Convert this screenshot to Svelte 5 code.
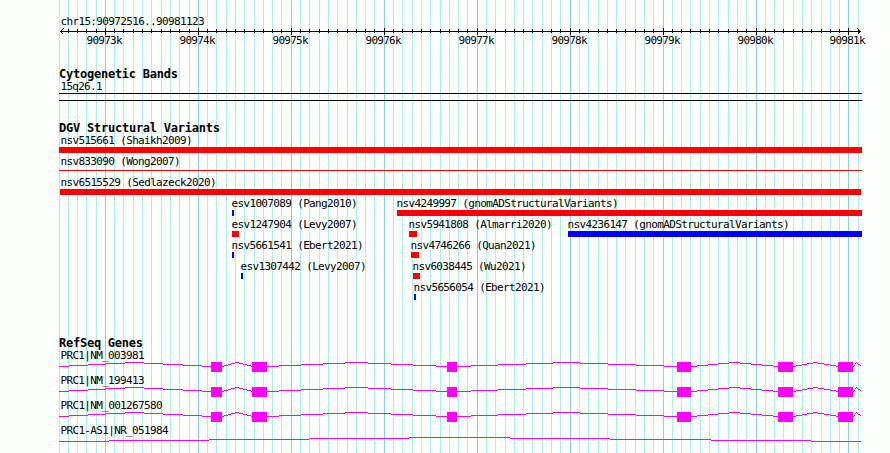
<script>
  const left = 59;
  const right = 862;
  const charWidth = 6;
  const boldWidth = 7;

  // x of a position given in hundreds of bases from 90973k
  const posX = (n) => Math.floor(105.39 + n * 9.2948);

  const ticks = [{ x: left, major: false }];
  for (let n = -4; n <= 81; n++) {
    ticks.push({ x: posX(n), major: n % 10 == 0, label: `${90973 + n / 10}k` });
  }
  const majors = ticks.filter((t) => t.major);

  const variants = [
    { row: 0, start: 59, end: 862, label: "nsv515661 (Shaikh2009)" },
    { row: 1, start: 59, end: 862, label: "nsv833090 (Wong2007)", thin: true },
    { row: 2, start: 60, end: 861, label: "nsv6515529 (Sedlazeck2020)" },
    { row: 3, start: 232, end: 234, label: "esv1007089 (Pang2010)", gain: true },
    { row: 3, start: 397, end: 862, label: "nsv4249997 (gnomADStructuralVariants)" },
    { row: 4, start: 232, end: 239, label: "esv1247904 (Levy2007)" },
    { row: 4, start: 409, end: 417, label: "nsv5941808 (Almarri2020)" },
    { row: 4, start: 568, end: 862, label: "nsv4236147 (gnomADStructuralVariants)", gain: true },
    { row: 5, start: 232, end: 234, label: "nsv5661541 (Ebert2021)", gain: true },
    { row: 5, start: 411, end: 419, label: "nsv4746266 (Quan2021)" },
    { row: 6, start: 241, end: 243, label: "esv1307442 (Levy2007)", gain: true },
    { row: 6, start: 413, end: 420, label: "nsv6038445 (Wu2021)" },
    { row: 7, start: 414, end: 416, label: "nsv5656054 (Ebert2021)", gain: true },
  ];

  const exons = [
    [211, 222],
    [252, 267],
    [447, 457],
    [677, 691],
    [778, 793],
    [838, 853],
  ];
  const genes = [
    { label: "PRC1|NM_003981", exons },
    { label: "PRC1|NM_199413", exons },
    { label: "PRC1|NM_001267580", exons },
    { label: "PRC1-AS1|NR_051984", exons: [] },
  ];

  // introns are drawn as one pixel high steps that peak in the middle
  function intronPath(exons) {
    const edges = [left, ...exons.flat(), 861];
    let d = "";
    for (let i = 0; i < edges.length; i += 2) {
      const a = edges[i];
      const b = edges[i + 1];
      const mid = Math.floor((a + b - 1) / 2);
      let start = a;
      let level = 0;
      for (let x = a; x <= b; x++) {
        const t = x <= mid ? (x - a) / (mid - a) : (b - x) / (b - mid);
        const next = Math.round(4 * t);
        if (next != level || x == b) {
          d += `M${start} ${14.5 - level}H${x}`;
          start = x;
          level = next;
        }
      }
    }
    return d;
  }
</script>

{#snippet text(x, y, value)}
  <text {x} {y} textLength={value.length * charWidth}>{value}</text>
{/snippet}

{#snippet title(value)}
  <text class="title" x="59" y="11" textLength={value.length * boldWidth}>{value}</text>
{/snippet}

<main>
  <svg class="grid" width="890" height="453">
    {#each ticks as tick}
      <rect class:major={tick.major} x={tick.x} y="0" width="1" height="453" />
    {/each}
  </svg>

  <section class="ruler">
    <svg width="890" height="67">
      {@render text(60, 25, "chr15:90972516..90981123")}
      <rect x="60" y="31" width="801" height="1" />
      {#each ticks.slice(1) as tick}
        {#if tick.major}
          <rect x={tick.x} y="28" width="1" height="7" />
        {:else}
          <rect x={tick.x} y="29" width="1" height="4" />
        {/if}
      {/each}
      <path class="arrow" d="M63.5 28.5L60.5 31.5L63.5 34.5M857.5 28.5L860.5 31.5L857.5 34.5" />
      {#each majors as tick}
        {@render text(tick.x - 19, 44, tick.label)}
      {/each}
    </svg>
  </section>

  <section class="bands">
    <svg width="890" height="54">
      {@render title("Cytogenetic Bands")}
      {@render text(60, 23, "15q26.1")}
      <rect x={left} y="26" width={right - left} height="1" />
      <rect x={left} y="33" width={right - left} height="1" />
    </svg>
  </section>

  <section class="variants">
    <svg width="890" height="215">
      {@render title("DGV Structural Variants")}
      {#each variants as v}
        {@render text(Math.max(60, v.start - 1), 23 + v.row * 21, v.label)}
        <rect
          class={v.gain ? "gain" : "loss"}
          x={v.start}
          y={(v.thin ? 28 : 26) + v.row * 21}
          width={v.end - v.start}
          height={v.thin ? 1 : 6}
        />
      {/each}
    </svg>
  </section>

  <section class="genes">
    <svg width="890" height="16">
      {@render title("RefSeq Genes")}
    </svg>
    {#each genes as gene}
      <svg width="890" height="25">
        {@render text(60, 7, gene.label)}
        <path class="intron" d={intronPath(gene.exons)} />
        {#each gene.exons as [a, b]}
          <rect class="exon" x={a} y="10" width={b - a} height="10" />
        {/each}
      </svg>
    {/each}
  </section>
</main>

<style>
  :global(body) {
    background: #fdfffc;
  }
  main {
    position: relative;
    width: 890px;
    height: 453px;
    overflow: hidden;
    display: flex;
    flex-direction: column;
  }
  svg {
    display: block;
    overflow: visible;
    shape-rendering: crispEdges;
  }
  section {
    position: relative;
  }
  .grid {
    position: absolute;
    top: 0;
    left: 0;
  }
  .grid rect {
    fill: #afeeee;
  }
  .grid .major {
    fill: #87ceeb;
  }
  text {
    font-family: "DejaVu Sans Mono", monospace;
    font-size: 11px;
    fill: #000;
    white-space: pre;
    transform: translateX(0.5px);
  }
  .title {
    font-size: 12px;
    font-weight: bold;
    transform: none;
  }
  .arrow {
    fill: none;
    stroke: #000;
  }
  .loss {
    fill: #f00;
  }
  .gain {
    fill: #00f;
  }
  .intron {
    fill: none;
    stroke: #f0f;
  }
  .exon {
    fill: #f0f;
  }
</style>
